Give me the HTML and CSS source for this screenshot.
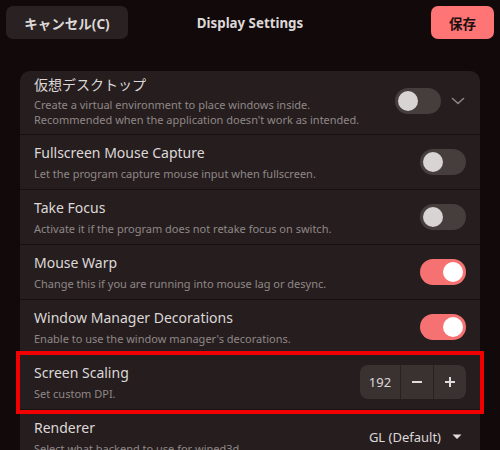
FILE: index.html
```html
<!DOCTYPE html>
<html>
<head>
<meta charset="utf-8">
<link rel="stylesheet" href="styles.css">
</head>
<body>
<header class="topbar">
  <button class="btn btn-cancel">キャンセル(C)</button>
  <div class="title">Display Settings</div>
  <button class="btn btn-save">保存</button>
</header>
<main class="content">
  <div class="card">
    <div class="row row-first">
      <div class="text">
        <div class="row-title">仮想デスクトップ</div>
        <div class="row-sub">Create a virtual environment to place windows inside.<br>Recommended when the application doesn't work as intended.</div>
      </div>
      <div class="controls">
        <div class="toggle"><span class="knob"></span></div>
        <svg class="chev" width="16" height="10" viewBox="0 0 16 10"><path d="M2.5 2.5 L8 7.5 L13.5 2.5" fill="none" stroke="#8c8484" stroke-width="1.6" stroke-linecap="round" stroke-linejoin="round"/></svg>
      </div>
    </div>
    <div class="row">
      <div class="text">
        <div class="row-title">Fullscreen Mouse Capture</div>
        <div class="row-sub">Let the program capture mouse input when fullscreen.</div>
      </div>
      <div class="toggle"><span class="knob"></span></div>
    </div>
    <div class="row">
      <div class="text">
        <div class="row-title">Take Focus</div>
        <div class="row-sub">Activate it if the program does not retake focus on switch.</div>
      </div>
      <div class="toggle"><span class="knob"></span></div>
    </div>
    <div class="row">
      <div class="text">
        <div class="row-title">Mouse Warp</div>
        <div class="row-sub">Change this if you are running into mouse lag or desync.</div>
      </div>
      <div class="toggle on"><span class="knob"></span></div>
    </div>
    <div class="row">
      <div class="text">
        <div class="row-title">Window Manager Decorations</div>
        <div class="row-sub">Enable to use the window manager's decorations.</div>
      </div>
      <div class="toggle on"><span class="knob"></span></div>
    </div>
    <div class="row row-highlight">
      <div class="text">
        <div class="row-title">Screen Scaling</div>
        <div class="row-sub">Set custom DPI.</div>
      </div>
      <div class="spin">
        <span class="spin-value">192</span>
        <span class="spin-btn"><svg width="12" height="12" viewBox="0 0 12 12"><path d="M1 6 H11" stroke="#e0dcdc" stroke-width="2"/></svg></span>
        <span class="spin-btn"><svg width="12" height="12" viewBox="0 0 12 12"><path d="M1 6 H11 M6 1 V11" stroke="#e0dcdc" stroke-width="2"/></svg></span>
      </div>
    </div>
    <div class="row">
      <div class="text">
        <div class="row-title">Renderer</div>
        <div class="row-sub">Select what backend to use for wined3d.</div>
      </div>
      <div class="dropdown">
        <span>GL (Default)</span>
        <svg width="10" height="6" viewBox="0 0 10 6"><path d="M0.5 0.5 H9.5 L5 5 Z" fill="#e0dcdc"/></svg>
      </div>
    </div>
  </div>
</main>
</body>
</html>
```
FILE: styles.css
```css
* { box-sizing: border-box; }
html, body {
  margin: 0;
  padding: 0;
  width: 500px;
  height: 450px;
  overflow: hidden;
  background: #120a0a;
  font-family: "Noto Sans", "Noto Sans CJK JP", sans-serif;
  color: #ddd8d8;
}
.topbar {
  display: grid;
  grid-template-columns: 1fr auto 1fr;
  align-items: center;
  padding: 6px 6px 0 6px;
  height: 39px;
}
.btn {
  border: none;
  height: 33px;
  border-radius: 7px;
  font-family: "Noto Sans", "Noto Sans CJK JP", sans-serif;
  font-weight: 700;
  font-size: 13.5px;
  padding: 0 17px;
}
.btn-cancel {
  background: #2a2222;
  color: #ddd8d8;
  width: 122px;
  justify-self: start;
}
.btn-save {
  background: #ff7474;
  color: #1c1010;
  width: 63px;
  justify-self: end;
}
.title {
  font-weight: 700;
  font-size: 13.3px;
  color: #ddd8d8;
  text-align: center;
}
.content {
  padding: 32px 20px 0 20px;
}
.card {
  background: #261e1e;
  border-radius: 10px;
}
.row {
  display: flex;
  align-items: center;
  padding: 8px 14px;
  min-height: 55px;
  border-bottom: 1px solid #171010;
  gap: 10px;
}
.row-first {
  padding: 4px 14px 7px 14px;
  min-height: 64px;
}
.row-first .row-sub {
  margin-top: 2px;
}
.row-highlight {
  outline: 4px solid #f00000;
  position: relative;
}
.text {
  flex: 1;
  min-width: 0;
}
.row-title {
  font-size: 14px;
  line-height: 20px;
  height: 20px;
  color: #ddd8d8;
}
.row-sub {
  font-size: 11px;
  line-height: 15px;
  color: #8f8787;
  margin-top: 3px;
}
.controls {
  display: flex;
  align-items: center;
  gap: 9px;
}
.chev { display: block; }
.toggle {
  width: 46px;
  height: 26px;
  border-radius: 13px;
  background: #463d3d;
  padding: 3px;
  display: flex;
  flex-shrink: 0;
}
.knob {
  width: 20px;
  height: 20px;
  border-radius: 50%;
  background: #d8d4d4;
}
.toggle.on {
  background: #f67272;
  justify-content: flex-end;
}
.toggle.on .knob {
  background: #ffffff;
}
.spin {
  display: flex;
  height: 34px;
  border-radius: 8px;
  background: #3a3131;
  overflow: hidden;
}
.spin-value {
  width: 40px;
  display: flex;
  align-items: center;
  justify-content: center;
  font-size: 13px;
  color: #ddd8d8;
}
.spin-btn {
  width: 33px;
  display: flex;
  align-items: center;
  justify-content: center;
  border-left: 1px solid #2a2222;
}
.spin-btn svg { display: block; }
.dropdown {
  display: flex;
  align-items: center;
  gap: 11px;
  font-size: 13px;
  color: #ddd8d8;
  padding-right: 4px;
}
```
